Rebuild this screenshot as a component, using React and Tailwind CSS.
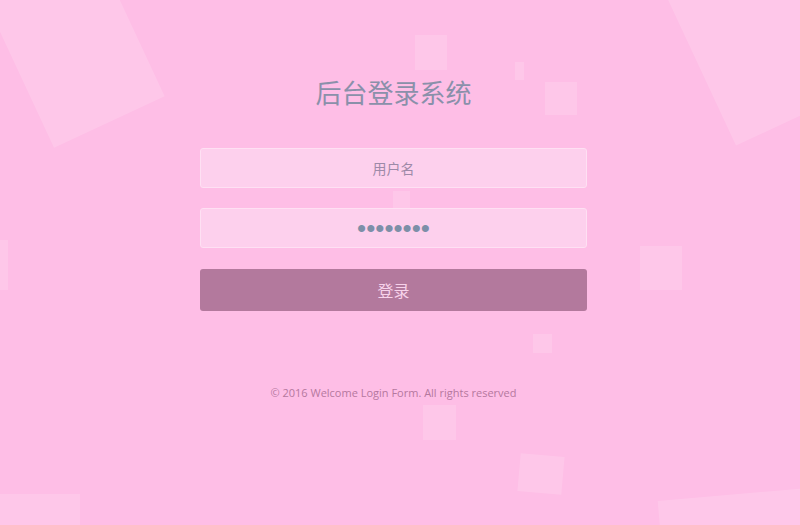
import { useState } from 'react';

const squares = [
  'left-[12px] top-[-42px] w-[122px] h-[172px] -rotate-[25deg]',
  'left-[690px] top-[-62px] w-[125px] h-[190px] -rotate-[25deg]',
  'left-[415px] top-[35px] w-[32px] h-[35px]',
  'left-[515px] top-[62px] w-[9px] h-[18px]',
  'left-[545px] top-[82px] w-[32px] h-[33px]',
  'left-[393px] top-[191px] w-[17px] h-[17px]',
  'left-[640px] top-[246px] w-[42px] h-[44px]',
  'left-[533px] top-[334px] w-[19px] h-[19px]',
  'left-[423px] top-[405px] w-[33px] h-[35px]',
  'left-[-4px] top-[240px] w-[12px] h-[50px]',
  'left-[519px] top-[455px] w-[44px] h-[38px] rotate-[5deg]',
  'left-[-20px] top-[494px] w-[100px] h-[60px]',
  'left-[660px] top-[494px] w-[160px] h-[60px] rotate-[-5deg]',
];

const App = () => {
  const [username, setUsername] = useState('');
  const [password, setPassword] = useState('12345678');

  return (
    <div className="relative w-full h-[525px] overflow-hidden bg-[#febee6] font-['Liberation_Sans','Noto_Sans_CJK_SC',sans-serif]">
      {/* background squares */}
      {squares.map((cls, i) => (
        <div key={i} className={`absolute bg-white/15 ${cls}`} />
      ))}

      <div className="relative ml-[200px] w-[387px] pt-[74px] flex flex-col">
        <h1 className="text-center text-[26px] leading-[36px] text-[#8a90aa] font-['Noto_Sans_CJK_SC',sans-serif]">
          后台登录系统
        </h1>

        <form
          onSubmit={(e) => e.preventDefault()}
          className="flex flex-col mt-[38px]"
        >
          <input
            type="text"
            value={username}
            onChange={(e) => setUsername(e.target.value)}
            placeholder="用户名"
            className="h-[40px] w-full rounded-[3px] border border-[#fee0f3] bg-[#fdd0ed] text-center text-[14px] text-[#8a90aa] placeholder:text-[#9d8aa8] outline-none font-['Noto_Sans_CJK_SC',sans-serif]"
          />
          <input
            type="password"
            value={password}
            onChange={(e) => setPassword(e.target.value)}
            className="mt-[20px] h-[40px] w-full rounded-[3px] border border-[#fee0f3] bg-[#fdd0ed] text-center text-[26px] tracking-[0px] text-[#7d8fa8] outline-none"
          />
          <button
            type="submit"
            className="mt-[21px] h-[42px] w-full rounded-[3px] bg-[#b3799d] text-[16px] text-[#f7d2ea] font-['Noto_Sans_CJK_SC',sans-serif]"
          >
            登录
          </button>
        </form>

        <p className="mt-[74px] text-center text-[11px] text-[#b5789e] font-['Open_Sans',sans-serif]">
          © 2016 Welcome Login Form. All rights reserved
        </p>
      </div>
    </div>
  );
};

export default App;
